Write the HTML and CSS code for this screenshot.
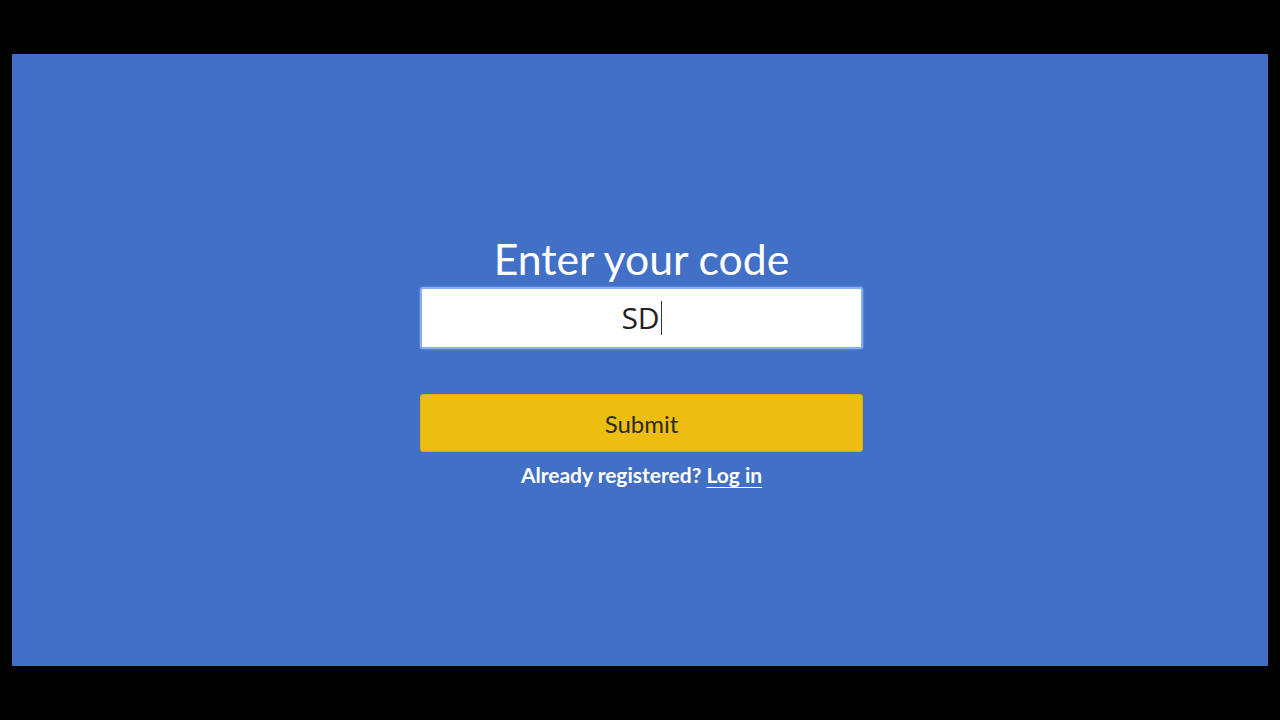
FILE: index.html
```html
<!DOCTYPE html>
<html>
<head>
<meta charset="utf-8">
<link rel="stylesheet" href="styles.css">
</head>
<body>
<main class="panel">
  <form class="code-form">
    <h1 class="title">Enter your code</h1>
    <div class="input-box"><span class="input-text">SD</span><span class="caret"></span></div>
    <button class="submit" type="button">Submit</button>
    <p class="login">Already registered? <a href="#" class="login-link">Log in</a></p>
  </form>
</main>
</body>
</html>
```

FILE: styles.css
```css
html, body {
  margin: 0;
  padding: 0;
  background: #000;
  width: 1280px;
  height: 720px;
  overflow: hidden;
}
.panel {
  margin: 54px 12px;
  height: 612px;
  background: #4270c6;
  display: flex;
  justify-content: center;
  font-family: Lato, "Liberation Sans", sans-serif;
}
.code-form {
  width: 443px;
  margin-left: 3px;
  padding-top: 177px;
  display: flex;
  flex-direction: column;
  align-items: center;
}
.title {
  margin: 0;
  font-weight: 400;
  font-size: 42.7px;
  line-height: 56px;
  color: #fff;
}
.input-box {
  box-sizing: border-box;
  width: 443px;
  height: 62px;
  background: #fff;
  border: 2px solid #86aef0;
  border-radius: 3px;
  box-shadow: 0 0 2px rgba(160, 195, 250, 0.8);
  display: flex;
  justify-content: center;
  align-items: center;
}
.input-text {
  font-family: "Open Sans", sans-serif;
  font-size: 30px;
  color: #222;
  margin-top: -2px;
}
.caret {
  width: 1px;
  height: 34px;
  background: #333;
  margin-left: 1px;
}
.submit {
  margin-top: 45px;
  width: 443px;
  height: 58px;
  background: #edbe10;
  border: 1px solid #d8ae14;
  border-radius: 3px;
  font-family: Lato, sans-serif;
  font-size: 24px;
  color: #2b2b2b;
  padding: 0;
}
.login {
  margin: 8px 0 0;
  font-weight: 700;
  font-size: 21px;
  line-height: 30px;
  color: #fff;
}
.login-link {
  color: #fff;
  text-decoration: underline;
  text-underline-offset: 4px;
  text-decoration-thickness: 1px;
}
```
